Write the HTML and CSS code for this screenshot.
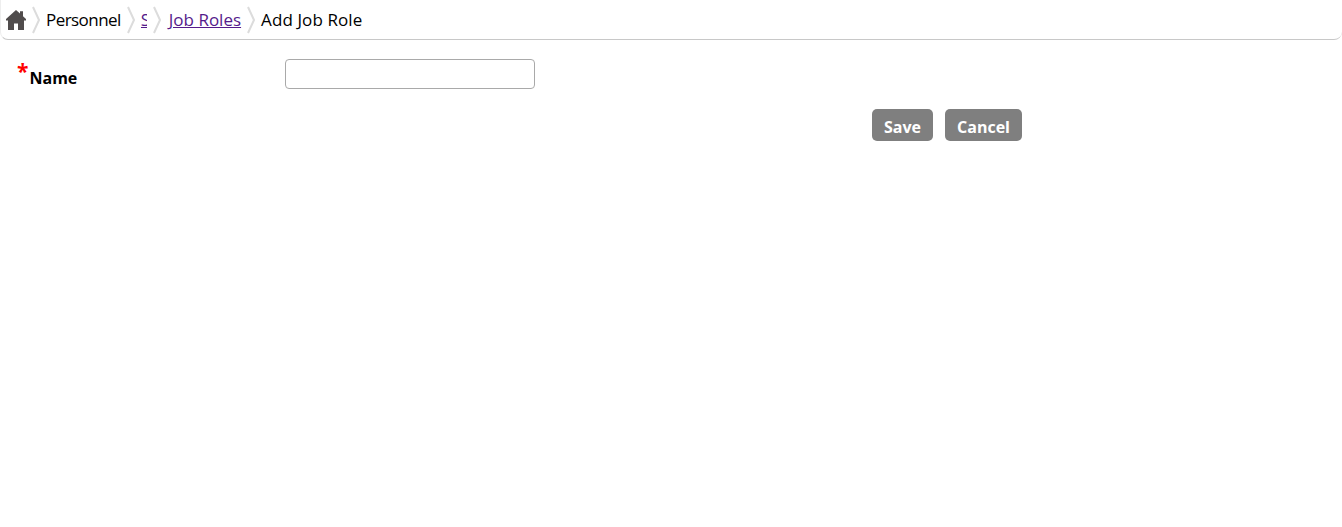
FILE: index.html
```html
<!DOCTYPE html>
<html lang="en">

<head>
  <meta charset="UTF-8" />
  <title>Add Job Role</title>
  <link rel="stylesheet" href="styles.css">
</head>

<body>
  <nav class="breadcrumb">
    <a class="crumb-home" href="#" aria-label="Home">
      <svg class="home-icon" viewBox="0 0 20 20" width="20" height="20">
        <path fill="#504c4c" d="M10 0 L14 3.6 V1.2 H17 V6.3 L20 9 V10.6 L18 10.6 V20 H12 V13.5 H8 V20 H2 V10.6 L0 10.6 V9 Z" />
      </svg>
    </a>
    <svg class="sep" viewBox="0 0 8 28" width="8" height="28"><path d="M1 1 L7 14 L1 27" /></svg>
    <span class="crumb crumb-tight">Personnel</span>
    <svg class="sep" viewBox="0 0 8 28" width="8" height="28"><path d="M1 1 L7 14 L1 27" /></svg>
    <a class="crumb crumb-cut" href="#">Setup</a>
    <svg class="sep sep-wide" viewBox="0 0 8 28" width="8" height="28"><path d="M1 1 L7 14 L1 27" /></svg>
    <a class="crumb" href="#">Job Roles</a>
    <svg class="sep" viewBox="0 0 8 28" width="8" height="28"><path d="M1 1 L7 14 L1 27" /></svg>
    <span class="crumb crumb-wide">Add Job Role</span>
  </nav>

  <form class="role-form">
    <div class="field-row">
      <label class="field-label" for="name"><span class="required">*</span>Name</label>
      <input class="text-input" id="name" type="text" />
    </div>
    <div class="button-row">
      <button class="btn" type="button">Save</button>
      <button class="btn" type="button">Cancel</button>
    </div>
  </form>
</body>

</html>
```

FILE: styles.css
```css
* {
  margin: 0;
  padding: 0;
  box-sizing: border-box;
}

body {
  background-color: #fff;
  font-family: 'Open Sans', 'Noto Sans', sans-serif;
  color: #000;
}

/* Breadcrumb */
.breadcrumb {
  display: flex;
  align-items: center;
  height: 40px;
  padding-left: 5px;
  border-bottom: 1px solid #c8c8c8;
  border-left: 1px solid #eee;
  border-radius: 0 0 8px 8px;
  font-size: 17px;
}

.crumb-home {
  display: flex;
}

.home-icon {
  display: block;
}

.sep {
  margin: 0 6px;
  flex: none;
}

.sep-wide {
  margin-right: 8px;
}

.sep path {
  fill: none;
  stroke: #dcdcdc;
  stroke-width: 2;
}

.crumb {
  color: #000;
  white-space: nowrap;
}

a.crumb {
  color: #551a8b;
}

.crumb-tight {
  letter-spacing: -0.55px;
}

.crumb-wide {
  letter-spacing: 0.1px;
}

.crumb-cut {
  display: block;
  width: 6px;
  overflow: hidden;
}

/* Form */
.role-form {
  width: 1022px;
}

.field-row {
  display: flex;
  padding: 19px 0 0 17px;
}

.field-label {
  width: 268px;
  padding-top: 8px;
  font-size: 16px;
  font-weight: 700;
}

.required {
  position: relative;
  top: -5px;
  margin-right: 1px;
  color: #f00;
  font-size: 21px;
  font-weight: 700;
  line-height: 16px;
}

.text-input {
  width: 250px;
  height: 30px;
  border: 1px solid #a9a9a9;
  border-radius: 4px;
  background-color: #fff;
}

.button-row {
  display: flex;
  justify-content: flex-end;
  gap: 12px;
  margin-top: 20px;
}

.btn {
  width: 61px;
  height: 32px;
  padding: 3px 0 0;
  border: none;
  border-radius: 5px;
  background-color: #7f7f7f;
  color: #fff;
  font-family: inherit;
  font-size: 16px;
  font-weight: 700;
}

.btn + .btn {
  width: 77px;
}
```
